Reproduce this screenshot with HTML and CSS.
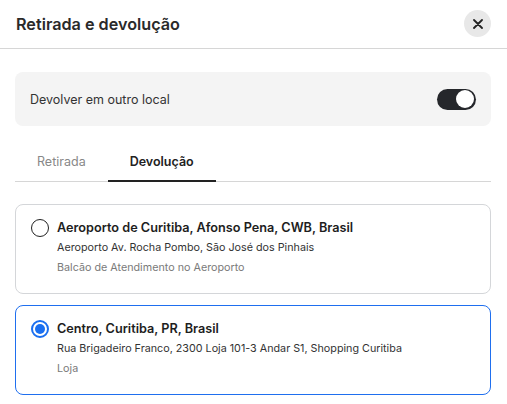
FILE: index.html
```html
<!DOCTYPE html>
<html lang="pt-BR">
<head>
  <meta charset="UTF-8">
  <meta name="viewport" content="width=device-width, initial-scale=1.0">
  <title>Retirada e devolução</title>
  <link rel="stylesheet" href="styles.css">
</head>
<body>
  <div class="modal">
    <header class="modal-header">
      <h1>Retirada e devolução</h1>
      <button class="close" aria-label="Fechar">
        <svg width="10" height="10" viewBox="0 0 10 10">
          <path d="M1 1 L9 9 M9 1 L1 9" stroke="#222" stroke-width="1.8" stroke-linecap="round"/>
        </svg>
      </button>
    </header>

    <div class="content">
      <div class="switch-row">
        <span>Devolver em outro local</span>
        <span class="switch"><span class="knob"></span></span>
      </div>

      <nav class="tabs">
        <span class="tab">Retirada</span>
        <span class="tab active">Devolução</span>
      </nav>

      <div class="cards">
        <label class="card">
          <span class="radio"></span>
          <span class="info">
            <strong>Aeroporto de Curitiba, Afonso Pena, CWB, Brasil</strong>
            <span class="addr">Aeroporto Av. Rocha Pombo, São José dos Pinhais</span>
            <span class="kind">Balcão de Atendimento no Aeroporto</span>
          </span>
        </label>

        <label class="card selected">
          <span class="radio"></span>
          <span class="info">
            <strong>Centro, Curitiba, PR, Brasil</strong>
            <span class="addr">Rua Brigadeiro Franco, 2300 Loja 101-3 Andar S1, Shopping Curitiba</span>
            <span class="kind">Loja</span>
          </span>
        </label>
      </div>
    </div>
  </div>
</body>
</html>
```

FILE: styles.css
```css
* {
  margin: 0;
  padding: 0;
  box-sizing: border-box;
}

body {
  font-family: Inter, 'Noto Sans', sans-serif;
  background: #fff;
  color: #222;
}

.modal-header {
  height: 49px;
  display: flex;
  align-items: center;
  justify-content: space-between;
  padding: 0 16px 1px 16px;
  border-bottom: 1px solid #d6d6d6;
}

.modal-header h1 {
  font-size: 16.2px;
  font-weight: 600;
  color: #2a2a2a;
}

.close {
  width: 27px;
  height: 27px;
  border-radius: 50%;
  border: none;
  background: #e8e8e8;
  display: flex;
  align-items: center;
  justify-content: center;
}

.content {
  padding: 23px 16px 0 15px;
}

/* toggle */
.switch-row {
  height: 54px;
  background: #f4f4f4;
  border-radius: 8px;
  display: flex;
  align-items: center;
  justify-content: space-between;
  padding: 0 15px;
  font-size: 12.5px;
  color: #333;
}

.switch {
  width: 39px;
  height: 21px;
  border-radius: 11px;
  background: #25272b;
  display: flex;
  align-items: center;
  justify-content: flex-end;
  padding-right: 2px;
}

.knob {
  width: 18px;
  height: 18px;
  border-radius: 50%;
  background: #fff;
}

/* tabs */
.tabs {
  display: flex;
  margin-top: 16px;
  height: 40px;
  border-bottom: 1px solid #d6d6d6;
}

.tab {
  display: flex;
  align-items: center;
  padding: 0 22px;
  font-size: 12.5px;
  color: #888;
}

.tab.active {
  color: #222;
  font-weight: 600;
  border-bottom: 2px solid #222;
  margin-bottom: -1px;
  padding-top: 1px;
}

/* cards */
.cards {
  margin-top: 22px;
  display: flex;
  flex-direction: column;
  gap: 11px;
}

.card {
  display: flex;
  gap: 8px;
  border: 1px solid #d4d6d9;
  border-radius: 8px;
  padding: 13px 15px 15px 15px;
}

.card.selected {
  border-color: #1f6fef;
}

.radio {
  flex: none;
  width: 18px;
  height: 18px;
  margin-top: 1px;
  border: 1.5px solid #222;
  border-radius: 50%;
  display: flex;
  align-items: center;
  justify-content: center;
}

.card.selected .radio {
  border: 2px solid #1a6ff0;
}

.card.selected .radio::after {
  content: "";
  width: 10px;
  height: 10px;
  border-radius: 50%;
  background: #1a6ff0;
}

.info {
  display: flex;
  flex-direction: column;
}

.info strong {
  font-size: 12.7px;
  font-weight: 600;
  line-height: 20px;
  color: #1e1e1e;
}

.addr, .kind {
  font-size: 10.75px;
  line-height: 20px;
  color: #333;
}

.kind {
  color: #7a7a7a;
}
```
